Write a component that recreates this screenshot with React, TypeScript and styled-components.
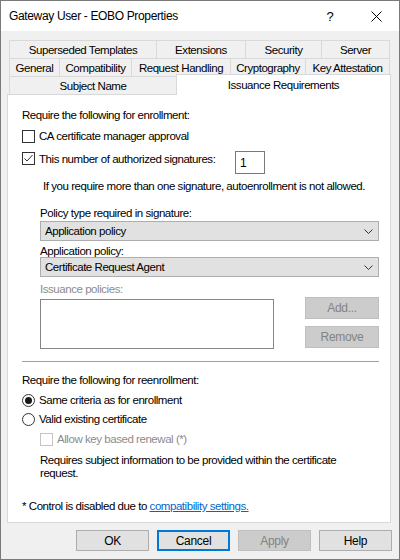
import React from 'react';
import styled, { createGlobalStyle, css } from 'styled-components';

const GlobalStyle = createGlobalStyle`
  html, body {
    margin: 0;
    padding: 0;
    background: #f0f0f0;
  }
  body {
    font-family: "Liberation Sans", Arial, sans-serif;
    font-size: 11.5px;
    letter-spacing: -0.45px;
    color: #000;
  }
`

const Window = styled.div`
  width: 400px;
  height: 560px;
  box-sizing: border-box;
  border: 1px solid #7a7a7a;
  background: #f0f0f0;
  display: flex;
  flex-direction: column;
`

const TitleBar = styled.div`
  height: 30px;
  flex-shrink: 0;
  display: flex;
  align-items: center;
  padding-left: 8px;
  background: #fff;
`

const Title = styled.div`
  flex: 1;
  font-size: 12px;
  letter-spacing: -0.35px;
`

const TitleButton = styled.div`
  width: 46px;
  height: 30px;
  display: flex;
  align-items: center;
  justify-content: center;
  font-size: 13px;
`

const Body = styled.div`
  flex: 1;
  display: flex;
  flex-direction: column;
  padding: 9px 8px 0 6px;
`

const TabStrip = styled.div`
  margin: 0 1px 0 2px;
  display: flex;
  flex-direction: column;
`

const TabRow = styled.div`
  display: flex;
  align-items: flex-end;
  height: 18px;
`

const Tab = styled.div<{ $w?: number; $active?: boolean }>`
  flex: ${p => (p.$w ? `0 0 ${p.$w}px` : '1')};
  box-sizing: border-box;
  height: 18px;
  border: 1px solid #d9d9d9;
  border-bottom: none;
  background: #f0f0f0;
  display: flex;
  align-items: center;
  justify-content: center;
  white-space: nowrap;

  & + & {
    margin-left: -1px;
  }

  ${p => p.$active && css`
    height: 21px;
    margin-bottom: -1px;
    margin-right: -1px;
    padding-bottom: 1px;
    background: #fff;
    position: relative;
    z-index: 1;
  `}
`

const Panel = styled.div`
  height: 429px;
  box-sizing: border-box;
  border: 1px solid #d9d9d9;
  background: #fff;
  padding: 13px 11px 0 14px;
  display: flex;
  flex-direction: column;
`

const Text = styled.div<{ $mt?: number; $lh?: number; $indent?: number; $muted?: boolean }>`
  line-height: ${p => p.$lh ?? 14}px;
  margin-top: ${p => p.$mt ?? 0}px;
  margin-left: ${p => p.$indent ?? 0}px;
  color: ${p => (p.$muted ? '#8c8c8c' : '#000')};
  white-space: nowrap;
`

const Option = styled.label<{ $mt?: number; $indent?: number; $disabled?: boolean }>`
  display: flex;
  align-items: center;
  gap: 4px;
  height: 14px;
  margin-top: ${p => p.$mt ?? 0}px;
  margin-left: ${p => p.$indent ?? 0}px;
  color: ${p => (p.$disabled ? '#8c8c8c' : '#000')};
  white-space: nowrap;
`

const Box = styled.span<{ $disabled?: boolean }>`
  width: 13px;
  height: 13px;
  box-sizing: border-box;
  flex-shrink: 0;
  border: 1px solid ${p => (p.$disabled ? '#c4c4c4' : '#333')};
  background: #fff;
  display: flex;
  align-items: center;
  justify-content: center;
`

const Radio = styled.span<{ $checked?: boolean }>`
  width: 13px;
  height: 13px;
  box-sizing: border-box;
  flex-shrink: 0;
  border: 1px solid #333;
  border-radius: 50%;
  background: #fff;
  display: flex;
  align-items: center;
  justify-content: center;

  &::after {
    content: '';
    width: 7px;
    height: 7px;
    border-radius: 50%;
    background: ${p => (p.$checked ? '#1a1a1a' : 'transparent')};
  }
`

const SignatureRow = styled.div`
  display: flex;
  align-items: flex-start;
  margin-top: 8px;
`

const SignatureLabel = styled(Option)`
  width: 213px;
  margin-top: 1px;
  height: 13px;
  line-height: 14px;
`

const NumberBox = styled.div`
  width: 30px;
  height: 23px;
  box-sizing: border-box;
  border: 1px solid #7a7a7a;
  padding-left: 4px;
  display: flex;
  align-items: center;
  font-size: 12px;
`

const SignaturePolicy = styled.div`
  margin-left: 18px;
  display: flex;
  flex-direction: column;
`

const Select = styled.div<{ $mt?: number }>`
  height: 20px;
  box-sizing: border-box;
  margin-top: ${p => p.$mt ?? 0}px;
  border: 1px solid #adadad;
  background: #e1e1e1;
  padding: 0 5px 0 4px;
  display: flex;
  align-items: center;
  justify-content: space-between;
`

const PolicyRow = styled.div`
  display: flex;
  align-items: flex-start;
  margin-top: 2px;
`

const ListBox = styled.div`
  width: 234px;
  height: 50px;
  box-sizing: border-box;
  margin-top: 2px;
  border: 1px solid #82878c;
  background: #fff;
`

const SideButtons = styled.div`
  margin-left: auto;
  display: flex;
  flex-direction: column;
  gap: 7px;
`

const Button = styled.div<{ $disabled?: boolean; $focused?: boolean; $w?: number }>`
  width: ${p => p.$w ?? 73}px;
  height: ${p => (p.$w ? 22 : 21)}px;
  box-sizing: border-box;
  border: 1px solid #adadad;
  background: #e1e1e1;
  display: flex;
  align-items: center;
  justify-content: center;
  font-size: 12px;
  letter-spacing: -0.3px;

  ${p => p.$focused && css`
    border: 2px solid #0078d7;
  `}

  ${p => p.$disabled && css`
    border-color: #bfbfbf;
    background: #cccccc;
    color: #838383;
  `}
`

const Separator = styled.div`
  height: 1px;
  margin-top: 12px;
  background: #a0a0a0;
`

const Link = styled.a`
  color: #0066cc;
  text-decoration: underline;
`

const ButtonBar = styled.div`
  display: flex;
  justify-content: flex-end;
  gap: 8px;
  margin: 7px -1px 0 0;
`

const Chevron = () => (
  <svg width="9" height="5" viewBox="0 0 9 5">
    <path d="M0.5 0.5 L4.5 4.5 L8.5 0.5" fill="none" stroke="#333" strokeWidth="1" />
  </svg>
)

const CheckMark = () => (
  <svg width="11" height="11" viewBox="0 0 11 11">
    <path d="M1.5 5.5 L4 8 L9.5 2" fill="none" stroke="#333" strokeWidth="1" />
  </svg>
)

const CloseIcon = () => (
  <svg width="11" height="11" viewBox="0 0 11 11">
    <path d="M0.5 0.5 L10.5 10.5 M10.5 0.5 L0.5 10.5" stroke="#000" strokeWidth="1" />
  </svg>
)

export default function App() {
  return (
    <>
      <GlobalStyle />
      <Window>
        <TitleBar>
          <Title>Gateway User - EOBO Properties</Title>
          <TitleButton>?</TitleButton>
          <TitleButton><CloseIcon /></TitleButton>
        </TitleBar>
        <Body>
          <TabStrip>
            <TabRow>
              <Tab $w={148}>Superseded Templates</Tab>
              <Tab $w={90}>Extensions</Tab>
              <Tab $w={77}>Security</Tab>
              <Tab>Server</Tab>
            </TabRow>
            <TabRow>
              <Tab $w={51}>General</Tab>
              <Tab $w={73}>Compatibility</Tab>
              <Tab $w={100}>Request Handling</Tab>
              <Tab $w={76}>Cryptography</Tab>
              <Tab>Key Attestation</Tab>
            </TabRow>
            <TabRow>
              <Tab $w={168}>Subject Name</Tab>
              <Tab $active>Issuance Requirements</Tab>
            </TabRow>
          </TabStrip>
          <Panel>
            <Text>Require the following for enrollment:</Text>
            <Option $mt={7}>
              <Box />
              CA certificate manager approval
            </Option>
            <SignatureRow>
              <SignatureLabel>
                <Box><CheckMark /></Box>
                This number of authorized signatures:
              </SignatureLabel>
              <NumberBox>1</NumberBox>
            </SignatureRow>
            <Text $mt={5} $indent={21}>
              If you require more than one signature, autoenrollment is not allowed.
            </Text>
            <SignaturePolicy>
              <Text $mt={14} $lh={12}>Policy type required in signature:</Text>
              <Select $mt={2}>
                <span>Application policy</span>
                <Chevron />
              </Select>
              <Text $mt={4} $lh={12}>Application policy:</Text>
              <Select>
                <span>Certificate Request Agent</span>
                <Chevron />
              </Select>
              <Text $mt={6} $lh={12} $muted>Issuance policies:</Text>
              <PolicyRow>
                <ListBox />
                <SideButtons>
                  <Button $w={74} $disabled>Add...</Button>
                  <Button $w={74} $disabled>Remove</Button>
                </SideButtons>
              </PolicyRow>
            </SignaturePolicy>
            <Separator />
            <Text $mt={11}>Require the following for reenrollment:</Text>
            <Option $mt={6}>
              <Radio $checked />
              Same criteria as for enrollment
            </Option>
            <Option $mt={5}>
              <Radio />
              Valid existing certificate
            </Option>
            <Option $mt={6} $indent={18} $disabled>
              <Box $disabled />
              Allow key based renewal (*)
            </Option>
            <Text $mt={8} $lh={13} $indent={18}>
              Requires subject information to be provided within the certificate
              <br />
              request.
            </Text>
            <Text $mt={19}>
              * Control is disabled due to <Link href="#">compatibility settings.</Link>
            </Text>
          </Panel>
          <ButtonBar>
            <Button>OK</Button>
            <Button $focused>Cancel</Button>
            <Button $disabled>Apply</Button>
            <Button>Help</Button>
          </ButtonBar>
        </Body>
      </Window>
    </>
  );
}
